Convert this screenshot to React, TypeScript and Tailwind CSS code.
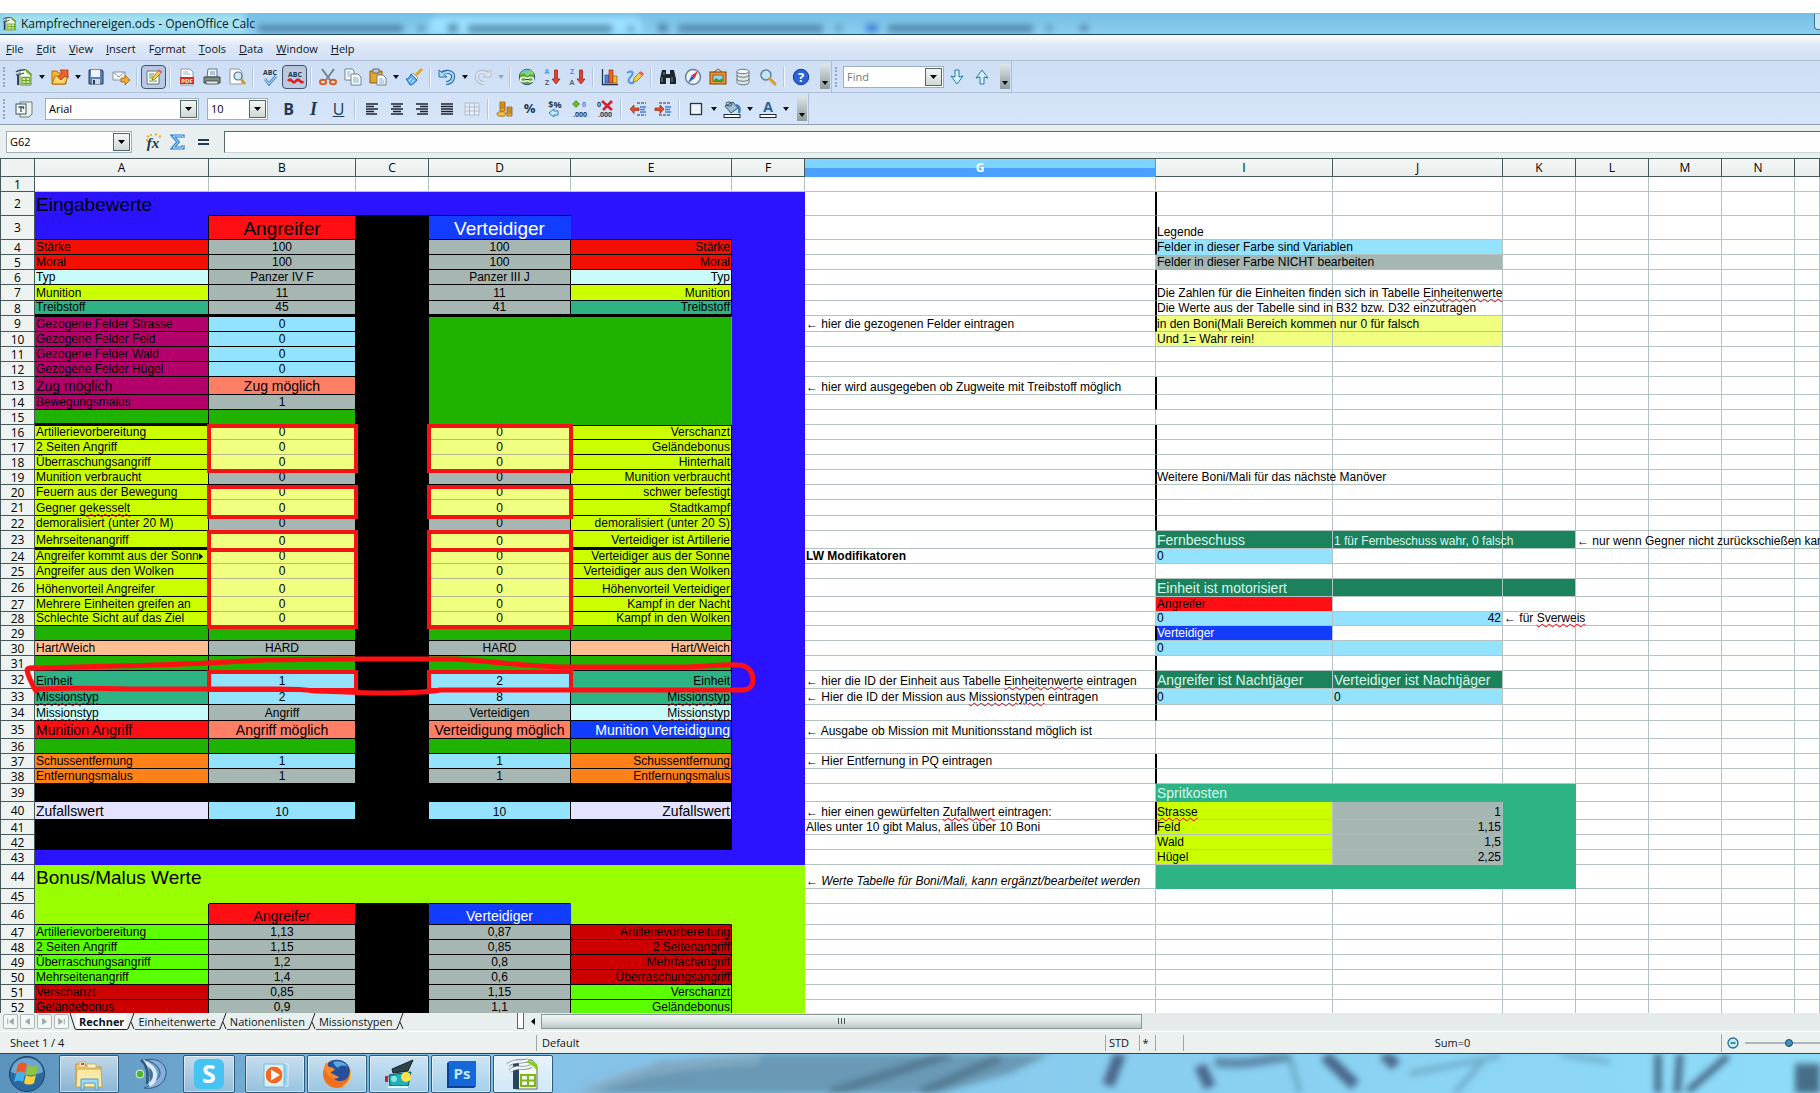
/**
 * App.tsx
 *
 * Spreadsheet window: title bar, menus, toolbars, the sheet itself,
 * sheet tabs, status bar and the desktop task bar.
 */

import React from 'react';
import clsx from 'clsx';

/* ---------- Sheet data ---------- */

interface CellData {
  text?: string;
  cls: string;
  colSpan?: number;
  rowSpan?: number;
}

interface RowData {
  n: number;
  h: string;
  cells: Record<string, CellData | null>;
}

const COLUMNS = ['A', 'B', 'C', 'D', 'E', 'F', 'G', 'I', 'J', 'K', 'L', 'M', 'N', 'O'];

const COLUMN_WIDTHS: Record<string, string> = {
  A: 'w-[174px]',
  B: 'w-[147px]',
  C: 'w-[73px]',
  D: 'w-[142px]',
  E: 'w-[161px]',
  F: 'w-[73px]',
  G: 'w-[351px]',
  I: 'w-[177px]',
  J: 'w-[170px]',
  K: 'w-[73px]',
  L: 'w-[73px]',
  M: 'w-[73px]',
  N: 'w-[73px]',
  O: 'w-auto',
};

const H14 = 'h-[14px]';
const H15 = 'h-[15px]';
const H16 = 'h-[16px]';
const H18 = 'h-[18px]';
const H21 = 'h-[21px]';
const H24 = 'h-[24px]';

const INK = 'border-black';
const GRID = 'border-[#b3c2c2]';

const GRAY = 'bg-[#a5b6b3]';
const SKY = 'bg-[#93e3ff]';
const YELLOW = 'bg-[#f1ff80]';
const LIME = 'bg-[#cbff00]';
const RED = 'bg-[#f20f00]';
const BRIGHT_RED = 'bg-[#ff0f14]';
const DARK_RED = 'bg-[#cc0000]';
const BLUE = 'bg-[#123dff]';
const ICE = 'bg-[#c9fbfb]';
const TEAL = 'bg-[#2eb385]';
const MAGENTA = 'bg-[#b4006b]';
const SALMON = 'bg-[#ff7f66]';
const GREEN = 'bg-[#1fb200]';
const NEON = 'bg-[#5aff00]';
const PEACH = 'bg-[#ffbe91]';
const ORANGE = 'bg-[#ff8117]';
const LAVENDER = 'bg-[#e3e3ff]';
const FOREST = 'bg-[#1c825c]';

const MEDIUM = 'text-sm/[16px]';
const LARGE = 'text-[19px]/[20px]';

const left = (text: string, ...cls: string[]): CellData => ({ text, cls: clsx(cls, INK) });
const mid = (text: string, ...cls: string[]): CellData => ({ text, cls: clsx('text-center', cls, INK) });
const right = (text: string, ...cls: string[]): CellData => ({ text, cls: clsx('text-right', cls, INK) });
const plain = (text: string, ...cls: string[]): CellData => ({ text, cls: clsx(cls, GRID) });
const soft = (text: string): CellData => ({ text, cls: `text-center ${YELLOW} border-b-[#b3b98c] border-r-black` });

// Attacker and defender columns mirror each other in most rows
const pair = (a: CellData, b: CellData, d: CellData, e: CellData) => ({ A: a, B: b, D: d, E: e });

const lime = (l: string, b: CellData, d: CellData, r: string, edge = '') =>
  pair(left(l, LIME, edge), b, d, right(r, LIME, edge));

const greenRow = () => pair(left('', GREEN), left('', GREEN), left('', GREEN), left('', GREEN));

const THICK = 'border-b-2';
const TOP = 'border-t';

const ROWS: RowData[] = [
  { n: 1, h: H15, cells: {} },
  { n: 2, h: H24, cells: {
    A: { text: 'Eingabewerte', cls: `${LARGE} bg-[#2c13ff] border-[#2c13ff]` },
    B: { cls: 'bg-[#2c13ff] border-[#2c13ff] border-b-black' },
    C: { cls: 'bg-[#2c13ff] border-[#2c13ff] border-b-black' },
    D: { cls: 'bg-[#2c13ff] border-[#2c13ff] border-b-black' },
  } },
  { n: 3, h: H24, cells: {
    A: { cls: 'bg-[#2c13ff] border-black' },
    B: mid('Angreifer', BRIGHT_RED, LARGE),
    D: { text: 'Verteidiger', cls: `text-center text-white ${BLUE} ${LARGE} border-r-[#123dff] border-b-black` },
    E: { cls: 'bg-[#2c13ff] border-[#2c13ff] border-b-black' },
    I: plain('Legende'),
  } },
  { n: 4, h: H15, cells: {
    ...pair(left('Stärke', RED), mid('100', GRAY), mid('100', GRAY), right('Stärke', RED)),
    I: { text: 'Felder in dieser Farbe sind Variablen', cls: `${SKY} border-[#93e3ff]` },
    J: plain('', SKY),
  } },
  { n: 5, h: H15, cells: {
    ...pair(left('Moral', RED), mid('100', GRAY), mid('100', GRAY), right('Moral', RED)),
    I: { text: 'Felder in dieser Farbe NICHT bearbeiten', cls: `${GRAY} border-[#a5b6b3]` },
    J: plain('', GRAY),
  } },
  { n: 6, h: H15, cells: pair(left('Typ', ICE), mid('Panzer IV F', GRAY), mid('Panzer III J', GRAY), right('Typ', ICE)) },
  { n: 7, h: H16, cells: {
    ...lime('Munition', mid('11', GRAY), mid('11', GRAY), 'Munition'),
    I: plain('Die Zahlen für die Einheiten finden sich in Tabelle ~Einheitenwerte~'),
  } },
  { n: 8, h: H15, cells: {
    ...pair(left('Treibstoff', TEAL, THICK), mid('45', GRAY, THICK), mid('41', GRAY, THICK), right('Treibstoff', TEAL, THICK)),
    I: plain('Die Werte aus der Tabelle sind in B32 bzw. D32 einzutragen'),
  } },
  { n: 9, h: H16, cells: {
    A: left('Gezogene Felder Strasse', MAGENTA, TOP),
    B: mid('0', SKY, TOP),
    D: { cls: `${GREEN} border-t border-t-black border-r-[#7d8f8c] border-b-[#1fb200]`, colSpan: 2, rowSpan: 7 },
    E: null,
    G: plain('← hier die gezogenen Felder eintragen'),
    I: plain('in den Boni(Mali Bereich kommen nur 0 für falsch', YELLOW),
    J: plain('', YELLOW),
  } },
  { n: 10, h: H15, cells: {
    A: left('Gezogene Felder Feld', MAGENTA), B: mid('0', SKY), D: null, E: null,
    I: plain('Und 1= Wahr rein!', YELLOW),
    J: plain('', YELLOW),
  } },
  { n: 11, h: H15, cells: { A: left('Gezogene Felder Wald', MAGENTA), B: mid('0', SKY), D: null, E: null } },
  { n: 12, h: H15, cells: { A: left('Gezogene Felder Hügel', MAGENTA), B: mid('0', SKY), D: null, E: null } },
  { n: 13, h: H18, cells: {
    A: left('Zug möglich', MAGENTA, MEDIUM), B: mid('Zug möglich', SALMON, MEDIUM), D: null, E: null,
    G: plain('← hier wird ausgegeben ob Zugweite mit Treibstoff möglich'),
  } },
  { n: 14, h: H15, cells: { A: left('Bewegungsmalus', MAGENTA), B: mid('1', GRAY), D: null, E: null } },
  { n: 15, h: H15, cells: { A: left('', GREEN, THICK), B: left('', GREEN), D: null, E: null } },
  { n: 16, h: H15, cells: lime('Artillerievorbereitung', soft('0'), soft('0'), 'Verschanzt', TOP) },
  { n: 17, h: H15, cells: lime('2 Seiten Angriff', soft('0'), soft('0'), 'Geländebonus') },
  { n: 18, h: H15, cells: lime('Überraschungsangriff', soft('0'), soft('0'), 'Hinterhalt') },
  { n: 19, h: H15, cells: {
    ...lime('Munition verbraucht', mid('0', GRAY), mid('0', GRAY), 'Munition verbraucht'),
    I: plain('Weitere Boni/Mali für das nächste Manöver'),
  } },
  { n: 20, h: H15, cells: lime('Feuern aus der Bewegung', soft('0'), soft('0'), 'schwer befestigt') },
  { n: 21, h: H16, cells: lime('Gegner ~gekesselt~', soft('0'), soft('0'), 'Stadtkampf') },
  { n: 22, h: H15, cells: lime('demoralisiert (unter 20 M)', mid('0', GRAY), mid('0', GRAY), 'demoralisiert (unter 20 S)') },
  { n: 23, h: H18, cells: {
    ...lime('Mehrseitenangriff', soft('0'), soft('0'), 'Verteidiger ist Artillerie', THICK),
    I: plain('Fernbeschuss', FOREST, MEDIUM, 'text-[#d9f7ec]'),
    J: plain('1 für Fernbeschuss wahr, 0 falsch', FOREST, 'text-[#d9f7ec]'),
    K: plain('', FOREST),
    L: plain('← nur wenn Gegner nicht zurückschießen kann'),
  } },
  { n: 24, h: H15, cells: {
    ...lime('Angreifer kommt aus der Sonn>', soft('0'), soft('0'), 'Verteidiger aus der Sonne', TOP),
    G: plain('LW Modifikatoren', 'font-bold'),
    I: plain('0', SKY),
  } },
  { n: 25, h: H15, cells: lime('Angreifer aus den Wolken', soft('0'), soft('0'), 'Verteidiger aus den Wolken') },
  { n: 26, h: H18, cells: {
    ...lime('Höhenvorteil Angreifer', soft('0'), soft('0'), 'Höhenvorteil Verteidiger'),
    I: plain('Einheit ist motorisiert', FOREST, MEDIUM, 'text-[#d9f7ec]'),
    J: plain('', FOREST),
    K: plain('', FOREST),
  } },
  { n: 27, h: H15, cells: {
    ...lime('Mehrere Einheiten greifen an', soft('0'), soft('0'), 'Kampf in der Nacht'),
    I: plain('Angreifer', BRIGHT_RED),
  } },
  { n: 28, h: H14, cells: {
    ...lime('Schlechte Sicht auf das Ziel', soft('0'), soft('0'), 'Kampf in den Wolken'),
    I: plain('0', SKY),
    J: plain('42', SKY, 'text-right'),
    K: plain('← für ~Sverweis~'),
  } },
  { n: 29, h: H15, cells: { ...greenRow(), I: plain('Verteidiger', BLUE, 'text-white') } },
  { n: 30, h: H15, cells: {
    ...pair(left('Hart/Weich', PEACH), mid('HARD', GRAY), mid('HARD', GRAY), right('Hart/Weich', PEACH)),
    I: plain('0', SKY),
    J: plain('', SKY),
  } },
  { n: 31, h: H15, cells: greenRow() },
  { n: 32, h: H18, cells: {
    ...pair(left('Einheit', TEAL), mid('1', SKY), mid('2', SKY), right('Einheit', TEAL)),
    G: plain('← hier die ID der Einheit aus Tabelle ~Einheitenwerte~ eintragen'),
    I: plain('Angreifer ist Nachtjäger', FOREST, MEDIUM, 'text-[#d9f7ec]'),
    J: plain('Verteidiger ist Nachtjäger', FOREST, MEDIUM, 'text-[#d9f7ec]'),
  } },
  { n: 33, h: H16, cells: {
    ...pair(left('~Missionstyp~', TEAL), mid('2', SKY), mid('8', SKY), right('~Missionstyp~', TEAL)),
    G: plain('← Hier die ID der Mission aus ~Missionstypen~ eintragen'),
    I: plain('0', SKY),
    J: plain('0', SKY),
  } },
  { n: 34, h: H16, cells: pair(left('~Missionstyp~', ICE), mid('Angriff', GRAY), mid('Verteidigen', GRAY), right('~Missionstyp~', ICE)) },
  { n: 35, h: H18, cells: {
    ...pair(
      left('Munition Angriff', BRIGHT_RED, MEDIUM),
      mid('Angriff möglich', SALMON, MEDIUM),
      mid('Verteidigung möglich', SALMON, MEDIUM),
      right('Munition Verteidigung', BLUE, MEDIUM, 'text-white'),
    ),
    G: plain('← Ausgabe ob Mission mit Munitionsstand möglich ist'),
  } },
  { n: 36, h: H15, cells: greenRow() },
  { n: 37, h: H15, cells: {
    ...pair(left('Schussentfernung', ORANGE), mid('1', SKY), mid('1', SKY), right('Schussentfernung', ORANGE)),
    G: plain('← Hier Entfernung in PQ eintragen'),
  } },
  { n: 38, h: H15, cells: pair(left('Entfernungsmalus', ORANGE), mid('1', GRAY), mid('1', GRAY), right('Entfernungsmalus', ORANGE)) },
  { n: 39, h: H18, cells: {
    I: { text: 'Spritkosten', cls: `${TEAL} ${MEDIUM} text-[#d9f7ec] border-[#2eb385]` },
    J: { cls: `${TEAL} border-[#2eb385]` },
    K: { cls: `${TEAL} border-[#2eb385]` },
  } },
  { n: 40, h: H18, cells: {
    ...pair(left('Zufallswert', LAVENDER, MEDIUM), mid('10', SKY), mid('10', SKY), right('Zufallswert', LAVENDER, MEDIUM)),
    G: plain('← hier einen gewürfelten ~Zufallwert~ eintragen:'),
    I: plain('~Strasse~', LIME),
    J: { text: '1', cls: `${GRAY} text-right border-[#adbbb8]` },
    K: { cls: `${TEAL} border-[#2eb385]` },
  } },
  { n: 41, h: H15, cells: {
    G: plain('Alles unter 10 gibt Malus, alles über 10 Boni'),
    I: plain('Feld', LIME),
    J: { text: '1,15', cls: `${GRAY} text-right border-[#adbbb8]` },
    K: { cls: `${TEAL} border-[#2eb385]` },
  } },
  { n: 42, h: H15, cells: {
    I: plain('Wald', LIME),
    J: { text: '1,5', cls: `${GRAY} text-right border-[#adbbb8]` },
    K: { cls: `${TEAL} border-[#2eb385]` },
  } },
  { n: 43, h: H15, cells: {
    I: plain('Hügel', LIME),
    J: { text: '2,25', cls: `${GRAY} text-right border-[#adbbb8]` },
    K: { cls: `${TEAL} border-[#2eb385]` },
  } },
  { n: 44, h: H24, cells: {
    A: { text: 'Bonus/Malus Werte', cls: `${LARGE} bg-[#99ff00] border-[#99ff00]` },
    G: plain('← Werte Tabelle für Boni/Mali, kann ergänzt/bearbeitet werden', 'italic'),
    I: { cls: `${TEAL} border-[#2eb385]` },
    J: { cls: `${TEAL} border-[#2eb385]` },
    K: { cls: `${TEAL} border-[#2eb385]` },
  } },
  { n: 45, h: H15, cells: {
    B: { cls: 'bg-[#99ff00] border-[#99ff00] border-b-black' },
    C: { cls: 'bg-[#99ff00] border-[#99ff00] border-b-black' },
    D: { cls: 'bg-[#99ff00] border-[#99ff00] border-b-black' },
  } },
  { n: 46, h: H21, cells: {
    A: { cls: 'bg-[#99ff00] border-black' },
    B: mid('Angreifer', BRIGHT_RED, MEDIUM),
    D: { text: 'Verteidiger', cls: `text-center text-white ${BLUE} ${MEDIUM} border-r-[#123dff] border-b-black` },
    E: { cls: 'bg-[#99ff00] border-[#99ff00] border-b-black' },
  } },
  { n: 47, h: H15, cells: pair(left('Artillerievorbereitung', NEON), mid('1,13', GRAY), mid('0,87', GRAY), right('Artillerievorbereitung', DARK_RED)) },
  { n: 48, h: H15, cells: pair(left('2 Seiten Angriff', NEON), mid('1,15', GRAY), mid('0,85', GRAY), right('2 Seitenangriff', DARK_RED)) },
  { n: 49, h: H15, cells: pair(left('Überraschungsangriff', NEON), mid('1,2', GRAY), mid('0,8', GRAY), right('Mehrfachangriff', DARK_RED)) },
  { n: 50, h: H15, cells: pair(left('Mehrseitenangriff', NEON), mid('1,4', GRAY), mid('0,6', GRAY), right('Überraschungsangriff', DARK_RED)) },
  { n: 51, h: H15, cells: pair(left('Verschanzt', DARK_RED), mid('0,85', GRAY), mid('1,15', GRAY), right('Verschanzt', NEON)) },
  { n: 52, h: H15, cells: pair(left('Geländebonus', DARK_RED), mid('0,9', GRAY), mid('1,1', GRAY), right('Geländebonus', NEON)) },
];

// Rows where a heavy black rule runs between G and I
const RULED = [2, 3, 4, 6, 7, 8, 9, 13, 14, 16, 17, 18, 19, 20, 21, 22, 29, 31, 32, 33, 34, 37, 38, 40, 41];

const fallbackCell = (col: string, n: number): CellData => {
  const inPanel = 'ABCDEF'.includes(col);
  if (!inPanel || n === 1) return { cls: GRID };
  if (col === 'C' && ((n >= 3 && n <= 42) || n >= 46)) return { cls: 'bg-black border-black' };
  if (col !== 'F' && (n === 39 || n === 41 || n === 42)) return { cls: 'bg-black border-black' };
  return { cls: n <= 43 ? 'bg-[#2c13ff] border-[#2c13ff]' : 'bg-[#99ff00] border-[#99ff00]' };
};

/* ---------- Sheet ---------- */

// ~word~ marks a misspelled word, a trailing > marks clipped text
const CellText = ({ text }: { text: string }) => {
  const clipped = text.endsWith('>');
  const parts = (clipped ? text.slice(0, -1) : text).split('~');
  return (
    <>
      {parts.map((part, i) =>
        i % 2 === 1 ? (
          <span key={i} className="underline decoration-red-600 decoration-wavy decoration-1 underline-offset-1">{part}</span>
        ) : (
          part
        ),
      )}
      {clipped && (
        <svg className="inline-block" width="4" height="7" viewBox="0 0 4 7" aria-hidden="true">
          <path d="M0 0l4 3.5L0 7z" />
        </svg>
      )}
    </>
  );
};

const Sheet = () => (
  <div className="relative min-h-0 flex-1 overflow-hidden border-t border-[#46585a] bg-white font-['Liberation_Sans',Arial,sans-serif] text-xs/[13px] text-black">
    <table className="w-full table-fixed border-separate border-spacing-0">
      <colgroup>
        <col className="w-[35px]" />
        {COLUMNS.map(c => (
          <col key={c} className={COLUMN_WIDTHS[c]} />
        ))}
      </colgroup>
      <thead>
        <tr className="h-[18px] font-['Open_Sans','Noto_Sans',sans-serif] text-xs/[16px]">
          <th className="border-r border-b border-l border-[#46585a] bg-[#eef2f1] p-0" aria-label="Select all" />
          {COLUMNS.map(c => (
            <th
              key={c}
              scope="col"
              className={clsx(
                'border-r border-b p-0',
                c === 'G'
                  ? 'border-[#4a9ff5] bg-linear-to-b from-[#7fd4ff] from-50% to-[#4aa0ff] to-50% font-bold text-white'
                  : 'border-[#46585a] bg-linear-to-b from-[#f4f7f7] to-[#e9eeed] font-normal',
              )}
            >
              {c === 'O' ? '' : c}
            </th>
          ))}
        </tr>
      </thead>
      <tbody>
        {ROWS.map(row => (
          <tr key={row.n} className={row.h}>
            <th
              scope="row"
              className="border-r border-b border-l border-[#46585a] bg-[#eef2f1] p-0 font-['Open_Sans','Noto_Sans',sans-serif] text-xs/[13px] font-normal"
            >
              {row.n}
            </th>
            {COLUMNS.map(col => {
              const cell = col in row.cells ? row.cells[col] : fallbackCell(col, row.n);
              if (!cell) return null;
              return (
                <td
                  key={col}
                  colSpan={cell.colSpan}
                  rowSpan={cell.rowSpan}
                  className={clsx(
                    'border-r border-b px-px py-0 align-bottom whitespace-nowrap',
                    cell.cls,
                    col === 'G' && RULED.includes(row.n) && 'border-r-black',
                    col === 'I' && RULED.includes(row.n) && 'border-l border-l-black pl-0',
                  )}
                >
                  {cell.text && <CellText text={cell.text} />}
                </td>
              );
            })}
          </tr>
        ))}
      </tbody>
    </table>

    {/* Red pen marks over the input cells */}
    <svg className="pointer-events-none absolute top-0 left-0" width="820" height="560" viewBox="0 158 820 560" fill="none" stroke="#f01414" aria-hidden="true">
      <g strokeWidth="4">
        <rect x="209" y="425" width="147" height="45" />
        <rect x="429" y="425" width="142" height="45" />
        <rect x="209" y="486" width="147" height="30" />
        <rect x="429" y="486" width="142" height="30" />
        <rect x="209" y="531" width="147" height="18" />
        <rect x="429" y="531" width="142" height="18" />
        <rect x="209" y="549" width="147" height="77" />
        <rect x="429" y="549" width="142" height="77" />
        <rect x="209" y="671" width="147" height="18" />
        <rect x="429" y="671" width="142" height="18" />
      </g>
      <path
        strokeWidth="5"
        stroke="#ff1014"
        strokeLinecap="round"
        strokeLinejoin="round"
        d="M36 690C32 683 28 675 27 669C28 666 33 667 40 667C90 665 150 665 207 662L265 659L340 658H455C490 660 510 664 560 666H680C705 666 720 663 738 664C748 664 753 671 753 679C753 686 748 689 742 689H560L440 689C425 692 400 692 385 692C350 692 335 690 315 690C300 688 290 688 280 688H130C100 687 60 687 36 688"
      />
    </svg>
  </div>
);

/* ---------- Toolbar pieces ---------- */

const Icon = ({ children }: { children: React.ReactNode }) => (
  <svg className="overflow-visible" width="18" height="18" viewBox="0 0 18 18" fill="none" aria-hidden="true">
    {children}
  </svg>
);

const Tool = ({ label, pressed, children }: { label: string; pressed?: boolean; children: React.ReactNode }) => (
  <button
    type="button"
    aria-label={label}
    className={clsx(
      'flex h-6 w-[25px] shrink-0 items-center justify-center',
      pressed && 'rounded-sm border border-[#44546b] bg-[#bccbe4] shadow-inner',
    )}
  >
    {children}
  </button>
);

const Drop = ({ label, faded }: { label: string; faded?: boolean }) => (
  <button type="button" aria-label={label} className="flex h-6 w-[11px] shrink-0 items-center justify-center">
    <svg width="6" height="4" viewBox="0 0 6 4" fill={faded ? '#9aa6b8' : '#111'} aria-hidden="true">
      <path d="M0 0h6L3 4z" />
    </svg>
  </button>
);

const Sep = () => <div className="mx-[3px] h-5 w-0.5 shrink-0 border-r border-l border-r-white/70 border-l-[#b4c5df]" />;

const Grip = () => <div className="mr-1 ml-[3px] h-5 w-1 shrink-0 border-l-2 border-dotted border-[#93a5bf]" />;

const Overflow = () => (
  <button type="button" aria-label="More commands" className="flex h-[25px] w-2.5 shrink-0 items-end justify-center bg-linear-to-b from-[#dfe6e8] to-[#8e9a9f] pb-1">
    <svg width="6" height="4" viewBox="0 0 6 4" aria-hidden="true">
      <path d="M0 0h6L3 4z" />
    </svg>
  </button>
);

const Combo = ({ label, value, placeholder, width }: { label: string; value?: string; placeholder?: string; width: string }) => (
  <div className={clsx('flex h-[22px] shrink-0 items-center border border-[#9fb0bd] bg-white p-px', width)}>
    <input
      aria-label={label}
      defaultValue={value}
      placeholder={placeholder}
      className="h-full min-w-0 flex-1 bg-transparent px-0.5 text-[11px] text-black outline-none placeholder:text-[#6f7a80]"
    />
    <button type="button" aria-label={`${label} list`} className="flex h-[18px] w-[17px] items-center justify-center border border-[#56676b] bg-linear-to-b from-[#f3f7f6] to-[#cfd9d8]">
      <svg width="7" height="4" viewBox="0 0 7 4" aria-hidden="true">
        <path d="M0 0h7L3.500 4z" />
      </svg>
    </button>
  </div>
);

const SheetDoc = () => (
  <>
    <path d="M5 2h7l4 4v11H5z" fill="#f7fbf4" stroke="#6d8f43" />
    <path d="M11 1l6 5-1 2-5-4z" fill="#6fae1f" />
    <path d="M1 4c3-3 6-1 9-2.500M1 7c3-2 5 0 8-2" stroke="#31465c" strokeWidth="1.200" />
    <path d="M3 7v10" stroke="#31465c" strokeWidth="2" />
    <path d="M7 9.500h8v6H7zM7 12.500h8M11 9.500v6" stroke="#69a81c" strokeWidth="1.300" />
  </>
);

const Lines = ({ d }: { d: string }) => (
  <Icon>
    <path d={d} stroke="#1d2733" strokeWidth="1.300" />
  </Icon>
);

const StandardBar = () => (
  <div className="flex h-8 items-center border-b border-[#aebfd3]">
    <Grip />
    <Tool label="New"><Icon><SheetDoc /></Icon></Tool>
    <Drop label="New list" />
    <Tool label="Open">
      <Icon>
        <path d="M1 3h5l1 2h8v11H1z" fill="#f7b733" stroke="#b56b0a" />
        <path d="M4 8h13l-3 8H1z" fill="#ffd467" stroke="#b56b0a" />
        <path d="M7 9l4-4-2-3h8v8l-3-2-4 4z" fill="#f0642c" stroke="#9c2a0c" strokeWidth=".7" />
      </Icon>
    </Tool>
    <Drop label="Open list" />
    <Tool label="Save">
      <Icon>
        <path d="M2 2h13l1 1v13H2z" fill="#5a83b4" stroke="#223b5e" />
        <path d="M4 2h9v7H4z" fill="#eef4fa" />
        <path d="M5 11h8v5H5z" fill="#cdd8e4" />
        <path d="M6 12h2v4H6z" fill="#223b5e" />
      </Icon>
    </Tool>
    <Tool label="Send as e-mail">
      <Icon>
        <path d="M1 4h12v8H1z" fill="#fafafa" stroke="#8794a0" />
        <path d="M1 4l6 5 6-5" stroke="#8794a0" />
        <path d="M9 10h4V7l5 5-5 5v-3H9z" fill="#f7a928" stroke="#a8620b" strokeWidth=".8" />
      </Icon>
    </Tool>
    <Sep />
    <Tool label="Edit file" pressed>
      <Icon>
        <path d="M2 3h12v13H2z" fill="#fdfdfd" stroke="#62727f" />
        <path d="M4 6h5M4 8h4M4 10h3M4 13h8" stroke="#5fa02b" />
        <path d="M7 12l1-3 6-7 3 2-7 7z" fill="#f5cf3e" stroke="#96691b" strokeWidth=".8" />
        <path d="M13 3l1-1.500 3 2L16 5z" fill="#e0559a" />
      </Icon>
    </Tool>
    <Sep />
    <Tool label="Export as PDF">
      <Icon>
        <path d="M3 1h9l3 3v13H3z" fill="#fff" stroke="#8b97a1" />
        <path d="M5 4h5M5 6h7" stroke="#a7b1ba" />
        <rect x="2" y="9" width="14" height="7" fill="#dd2a1e" />
        <text x="9" y="15" fontSize="6" fontWeight="700" textAnchor="middle" fill="#fff">PDF</text>
      </Icon>
    </Tool>
    <Tool label="Print">
      <Icon>
        <path d="M5 1h9v8H4z" fill="#f4f8fb" stroke="#62727f" />
        <path d="M7 4h5M7 6h5" stroke="#5b94cf" />
        <path d="M1 9h16v6H1z" fill="#7f8c88" stroke="#37433f" />
        <path d="M3 13h12v3H3z" fill="#e6ebe4" stroke="#37433f" strokeWidth=".8" />
      </Icon>
    </Tool>
    <Tool label="Page preview">
      <Icon>
        <path d="M2 1h9l3 3v12H2z" fill="#fff" stroke="#8b97a1" />
        <circle cx="10" cy="8" r="4" fill="#cdeaf7" stroke="#5e7485" strokeWidth="1.200" />
        <path d="M13 11l4 5" stroke="#cf9524" strokeWidth="2.500" />
      </Icon>
    </Tool>
    <Sep />
    <Tool label="Spelling">
      <Icon>
        <text x="9" y="7" fontSize="7" fontWeight="700" textAnchor="middle" fill="#26364a">ABC</text>
        <path d="M4 11l4 5 7-8" stroke="#3d85cd" strokeWidth="2.800" />
        <path d="M4 11l4 5 7-8" stroke="#dff0ff" strokeWidth="1" />
      </Icon>
    </Tool>
    <Tool label="AutoSpellcheck" pressed>
      <Icon>
        <text x="9" y="9" fontSize="7" fontWeight="700" textAnchor="middle" fill="#26364a">ABC</text>
        <path d="M2 13q2-2.500 4 0t4 0 4 0 3 0" stroke="#df1f1f" strokeWidth="2.800" />
      </Icon>
    </Tool>
    <Sep />
    <Tool label="Cut">
      <Icon>
        <path d="M3 1l8 11M15 1L7 12" stroke="#718292" strokeWidth="2" />
        <ellipse cx="4" cy="14" rx="3" ry="2.300" stroke="#dd5b1c" strokeWidth="2" />
        <ellipse cx="14" cy="14" rx="3" ry="2.300" stroke="#dd5b1c" strokeWidth="2" />
      </Icon>
    </Tool>
    <Tool label="Copy">
      <Icon>
        <path d="M1 1h7l2 2v9H1z" fill="#fff" stroke="#6c8092" />
        <path d="M7 6h7l3 3v8H7z" fill="#fff" stroke="#6c8092" />
        <path d="M3 4h4M3 6h3M3 8h3M9 10h5M9 12h6M9 14h6" stroke="#7fa9d3" />
      </Icon>
    </Tool>
    <Tool label="Paste">
      <Icon>
        <path d="M1 3h12v12H1z" fill="#e7a52b" stroke="#8f5d0d" />
        <path d="M4 1h6v4H4z" fill="#c4ccd1" stroke="#5f6d76" />
        <path d="M8 7h6l3 3v7H8z" fill="#fff" stroke="#6c8092" />
        <path d="M10 11h4M10 13h5M10 15h5" stroke="#7fa9d3" />
      </Icon>
    </Tool>
    <Drop label="Paste list" />
    <Tool label="Format paintbrush">
      <Icon>
        <path d="M17 1l-6 6" stroke="#e2a52f" strokeWidth="3" />
        <path d="M8 5l5 5-2 2-5-5z" fill="#e8edf2" stroke="#6a7a89" strokeWidth=".7" />
        <path d="M6 6l6 6c-2 3-5 5-7 5-1-2-2-3-4-6 2 0 4-2 5-5z" fill="#67b0f2" stroke="#2362b4" />
        <path d="M4 13l3-3M6 15l3-3" stroke="#fff" />
      </Icon>
    </Tool>
    <Sep />
    <Tool label="Undo">
      <Icon>
        <path d="M4 5c7-3 12 0 11 5-1 3-3 5-7 5" stroke="#2d6aa5" strokeWidth="4" />
        <path d="M1 2v7h8z" fill="#a8dcf6" stroke="#2d6aa5" />
        <path d="M4 6c7-4 12-1 11 4-1 3-3 5-7 5" stroke="#a8dcf6" strokeWidth="2" />
      </Icon>
    </Tool>
    <Drop label="Undo list" />
    <Tool label="Redo">
      <Icon>
        <path d="M14 5C7 2 2 5 3 10c1 3 3 5 7 5" stroke="#b3bfcc" strokeWidth="4" />
        <path d="M17 2v7H9z" fill="#dde6f1" stroke="#b3bfcc" />
        <path d="M14 6C7 2 2 5 3 10c1 3 3 5 7 5" stroke="#dde6f1" strokeWidth="2" />
      </Icon>
    </Tool>
    <Drop label="Redo list" faded />
    <Sep />
    <Tool label="Hyperlink">
      <Icon>
        <circle cx="9" cy="9" r="7.700" fill="#5fa83a" stroke="#28557e" />
        <path d="M2 7c1-4 5-6 8-5 4 0 5 2 6 5l-4-1-3 2-3-3z" fill="#8fdc4f" />
        <path d="M4 4c3-3 7-3 9 0l-4 1z" fill="#6dc0ee" />
        <rect x="2.500" y="9.500" width="6" height="4" rx="2" stroke="#fff" strokeWidth="1.500" />
        <rect x="9.500" y="9.500" width="6" height="4" rx="2" stroke="#fff" strokeWidth="1.500" />
        <path d="M7 11.500h4" stroke="#31465c" />
      </Icon>
    </Tool>
    <Tool label="Sort ascending">
      <Icon>
        <text x="4" y="6" fontSize="7" fontWeight="700" textAnchor="middle" fill="#4599e8">A</text>
        <text x="4" y="17" fontSize="7" fontWeight="700" textAnchor="middle" fill="#536577">Z</text>
        <path d="M11.500 2h3v9H17l-4 5-4-5h2.500z" fill="#e8402b" stroke="#8c1d10" strokeWidth=".7" />
      </Icon>
    </Tool>
    <Tool label="Sort descending">
      <Icon>
        <text x="4" y="6" fontSize="7" fontWeight="700" textAnchor="middle" fill="#4599e8">Z</text>
        <text x="4" y="17" fontSize="7" fontWeight="700" textAnchor="middle" fill="#536577">A</text>
        <path d="M11.500 2h3v9H17l-4 5-4-5h2.500z" fill="#e8402b" stroke="#8c1d10" strokeWidth=".7" />
      </Icon>
    </Tool>
    <Sep />
    <Tool label="Chart">
      <Icon>
        <path d="M1.500 1v15.500H17" stroke="#25344a" strokeWidth="1.300" />
        <path d="M4 7h4v8H4z" fill="#3f86e4" stroke="#1c4784" strokeWidth=".7" />
        <path d="M8 2h4v13H8z" fill="#f1622c" stroke="#8e2b0d" strokeWidth=".7" />
        <path d="M12 8h4v7h-4z" fill="#f4b82d" stroke="#8a5c0c" strokeWidth=".7" />
      </Icon>
    </Tool>
    <Tool label="Show draw functions">
      <Icon>
        <path d="M1 5c4-3 7-1 5 2s-5 5-3 7 4 1 5 0" stroke="#4f94e2" strokeWidth="2" />
        <path d="M7 14l1-4 6-6 3 3-6 6z" fill="#f5cf3e" stroke="#96691b" strokeWidth=".8" />
        <path d="M13 5l2-2 3 3-2 2z" fill="#e2645c" />
      </Icon>
    </Tool>
    <Sep />
    <Tool label="Find and replace">
      <Icon>
        <path d="M3 2h4v4h4V2h4l2 9v5h-6v-6H7v6H1v-5z" fill="#1c242c" />
        <path d="M3 9v5M13 9v5M5 4v3" stroke="#79889a" />
      </Icon>
    </Tool>
    <Tool label="Navigator">
      <Icon>
        <circle cx="9" cy="9" r="7.500" fill="#eef5fb" stroke="#6d8294" strokeWidth="1.500" />
        <path d="M14 3l-3.500 7.500-3-3z" fill="#dd2a2a" />
        <path d="M4 15l3.500-7.500 3 3z" fill="#2a62c5" />
      </Icon>
    </Tool>
    <Tool label="Gallery">
      <Icon>
        <path d="M5 4l4-3 4 3" stroke="#7b5313" />
        <rect x="1" y="4" width="16" height="12" fill="#f0952f" stroke="#7b3f08" />
        <rect x="4" y="7" width="10" height="6.500" fill="#8fd3f5" stroke="#7b3f08" strokeWidth=".7" />
        <path d="M4 13l3-3 3 2 4-2v3.500H4z" fill="#439d2c" />
      </Icon>
    </Tool>
    <Tool label="Data sources">
      <Icon>
        <path d="M3 3.500v11c0 3 12 3 12 0v-11" fill="#dfe6e8" stroke="#697a80" />
        <ellipse cx="9" cy="3.500" rx="6" ry="2.200" fill="#f7fafa" stroke="#697a80" />
        <path d="M3 7c0 3 12 3 12 0M3 11c0 3 12 3 12 0" stroke="#697a80" />
      </Icon>
    </Tool>
    <Tool label="Zoom">
      <Icon>
        <circle cx="7" cy="7" r="5" fill="#bfe6f8" stroke="#687f90" strokeWidth="1.500" />
        <path d="M11 11l5 5" stroke="#dd9c27" strokeWidth="3" strokeLinecap="round" />
      </Icon>
    </Tool>
    <Sep />
    <Tool label="Help">
      <Icon>
        <circle cx="9" cy="9" r="7.700" fill="#2a62dc" stroke="#153a94" />
        <text x="9" y="14" fontSize="13" fontWeight="700" textAnchor="middle" fill="#fff">?</text>
      </Icon>
    </Tool>
    <div className="ml-[7px] flex h-full items-center border-r border-[#aebfd3] pr-px"><Overflow /></div>
    <div className="flex h-full items-center border-r border-[#aebfd3] pr-px">
      <Grip />
      <Combo label="Find" placeholder="Find" width="w-[101px]" />
      <Tool label="Find next">
        <Icon>
          <path d="M7 2h4v7l4-1-6 8-6-8 4 1z" fill="#d8f3fb" stroke="#247aa3" />
        </Icon>
      </Tool>
      <Tool label="Find previous">
        <Icon>
          <path d="M7 16h4V9l4 1-6-8-6 8 4-1z" fill="#d8f3fb" stroke="#247aa3" />
        </Icon>
      </Tool>
      <div className="ml-1.5 flex"><Overflow /></div>
    </div>
  </div>
);

const FormattingBar = () => (
  <div className="flex h-[31px] items-center">
    <Grip />
    <Tool label="Styles and formatting">
      <Icon>
        <path d="M5 2h12v12l-3 3H5z" fill="#eaf1ee" stroke="#6d8080" />
        <rect x="1" y="4" width="10" height="10" fill="#f6faf9" stroke="#41535a" />
        <path d="M3.500 7h5v2M6 7v5" stroke="#41535a" strokeWidth="1.300" />
      </Icon>
    </Tool>
    <div className="ml-[9px] flex shrink-0 gap-2">
      <Combo label="Font name" value="Arial" width="w-[154px]" />
      <Combo label="Font size" value="10" width="w-[61px]" />
    </div>
    <div className="ml-2 flex text-base/6 text-[#1f3a57]">
      <Tool label="Bold"><span className="font-bold">B</span></Tool>
      <Tool label="Italic"><span className="font-['Liberation_Serif',serif] text-lg font-bold italic">I</span></Tool>
      <Tool label="Underline"><span className="underline">U</span></Tool>
    </div>
    <Sep />
    <Tool label="Align left"><Lines d="M3 4h12M3 6.500h8M3 9h12M3 11.500h8M3 14h11" /></Tool>
    <Tool label="Centre"><Lines d="M3 4h12M5 6.500h8M3 9h12M5 11.500h8M3 14h12" /></Tool>
    <Tool label="Align right"><Lines d="M3 4h12M7 6.500h8M3 9h12M7 11.500h8M4 14h11" /></Tool>
    <Tool label="Justified"><Lines d="M3 4h12M3 6.500h12M3 9h12M3 11.500h12M3 14h12" /></Tool>
    <Tool label="Merge cells">
      <Icon>
        <path d="M2 3h14v12H2zM2 7h14M2 11h14M6.500 3v12M11.500 3v12" fill="#e6edf7" stroke="#b0bccb" />
      </Icon>
    </Tool>
    <Sep />
    <Tool label="Currency">
      <Icon>
        <path d="M4 2h5v9H4z" fill="#f2ae2c" stroke="#955b0c" strokeWidth=".8" />
        <path d="M4 4h5M4 6h5M4 8h5" stroke="#955b0c" strokeWidth=".8" />
        <path d="M11 7h5v9h-5z" fill="#f2ae2c" stroke="#955b0c" strokeWidth=".8" />
        <path d="M11 9h5M11 11h5M11 13h5" stroke="#955b0c" strokeWidth=".8" />
        <ellipse cx="5.500" cy="14" rx="4.500" ry="2.300" fill="#f7bd48" stroke="#955b0c" strokeWidth=".8" />
      </Icon>
    </Tool>
    <Tool label="Percent"><span className="text-[13px] font-bold text-[#1f3a57]">%</span></Tool>
    <Tool label="Standard format">
      <Icon>
        <text x="9" y="8" fontSize="9" fontWeight="700" textAnchor="middle" fill="#1f3a57">$%</text>
        <path d="M3 13l5-4v2h4v4H8v2z" fill="#c9ecfb" stroke="#2d7fbd" />
      </Icon>
    </Tool>
    <Tool label="Add decimal place">
      <Icon>
        <path d="M4 1h2v2h2v2H6v2H4V5H2V3h2z" fill="#6fc42f" stroke="#3d8410" strokeWidth=".7" />
        <text x="13" y="7" fontSize="7" fontWeight="700" textAnchor="middle" fill="#3d7fdd">0</text>
        <text x="9" y="17" fontSize="7" fontWeight="700" textAnchor="middle" fill="#1f3a57">.000</text>
      </Icon>
    </Tool>
    <Tool label="Delete decimal place">
      <Icon>
        <text x="3" y="7" fontSize="7" fontWeight="700" textAnchor="middle" fill="#1f3a57">0</text>
        <text x="9" y="17" fontSize="7" fontWeight="700" textAnchor="middle" fill="#1f3a57">.000</text>
        <path d="M6 1l10 9M16 1L7 10" stroke="#d61f2c" strokeWidth="2.600" />
      </Icon>
    </Tool>
    <Sep />
    <Tool label="Decrease indent">
      <Icon>
        <path d="M8 3h9M8 15h9" stroke="#27364a" strokeDasharray="3 1" />
        <path d="M11 7h6M11 9.500h5M11 12h6" stroke="#3d7fdd" strokeWidth="1.500" />
        <path d="M1 9l4-4v3h5v2.500H5v3z" fill="#e8502b" stroke="#8c260f" strokeWidth=".7" />
      </Icon>
    </Tool>
    <Tool label="Increase indent">
      <Icon>
        <path d="M5 3h12M5 15h12" stroke="#27364a" strokeDasharray="3 1" />
        <path d="M11 7h6M11 9.500h5M11 12h6" stroke="#3d7fdd" strokeWidth="1.500" />
        <path d="M10 9L6 5v3H1v2.500h5v3z" fill="#e8502b" stroke="#8c260f" strokeWidth=".7" />
      </Icon>
    </Tool>
    <Sep />
    <Tool label="Borders">
      <Icon>
        <rect x="3.500" y="3.500" width="11" height="11" fill="#eef5f6" stroke="#26343d" strokeWidth="1.300" />
      </Icon>
    </Tool>
    <Drop label="Borders list" />
    <Tool label="Background colour">
      <Icon>
        <path d="M2 6l8-4 5 6-7 5z" fill="#9fbfd6" stroke="#36506a" />
        <path d="M13 5c4 1 4 4 3 8" stroke="#3d7fbd" strokeWidth="2.500" />
        <ellipse cx="6" cy="4" rx="3" ry="2" stroke="#36506a" />
        <rect x="1" y="14.500" width="16" height="3" fill="#fff" stroke="#1d2733" />
      </Icon>
    </Tool>
    <Drop label="Background colour list" />
    <Tool label="Font colour">
      <Icon>
        <text x="9" y="12" fontSize="14" fontWeight="700" textAnchor="middle" fill="#2f5f92">A</text>
        <rect x="1" y="14.500" width="16" height="3" fill="#fff" stroke="#1d2733" />
      </Icon>
    </Tool>
    <Drop label="Font colour list" />
    <div className="ml-1.5 flex h-full items-center border-r border-[#aebfd3] pr-px"><Overflow /></div>
  </div>
);

/* ---------- Window chrome ---------- */

const MENUS: [string, string, string][] = [
  ['', 'F', 'ile'],
  ['', 'E', 'dit'],
  ['', 'V', 'iew'],
  ['', 'I', 'nsert'],
  ['F', 'o', 'rmat'],
  ['', 'T', 'ools'],
  ['', 'D', 'ata'],
  ['', 'W', 'indow'],
  ['', 'H', 'elp'],
];

const TitleBar = () => (
  <header className="relative flex h-[22px] shrink-0 items-center overflow-hidden border-b border-[#1f4a63] bg-linear-to-b from-[#74bfe6] to-[#8ccdf0] pl-[2px]">
    {/* Window behind shows through the glass */}
    <svg className="absolute inset-0 h-full w-full blur-[3px]" aria-hidden="true">
      <rect x="0" y="0" width="245" height="22" fill="#a4e0f0" />
      <rect x="430" y="4" width="212" height="24" rx="8" fill="#9be0ff" />
      <g fill="#2f6283" opacity=".65">
        <rect x="258" y="12" width="145" height="7" />
        <rect x="418" y="13" width="6" height="5" />
        <rect x="448" y="11" width="10" height="8" />
        <rect x="468" y="12" width="144" height="7" />
        <rect x="628" y="13" width="6" height="5" />
        <rect x="658" y="11" width="10" height="8" />
        <rect x="678" y="12" width="145" height="7" />
        <rect x="836" y="13" width="6" height="5" />
        <rect x="866" y="11" width="12" height="8" fill="#1c5fc9" />
        <rect x="888" y="12" width="145" height="7" />
        <rect x="1046" y="13" width="6" height="5" />
        <rect x="1080" y="12" width="8" height="6" />
      </g>
    </svg>
    <div className="relative flex flex-1 items-center gap-1">
      <svg width="15" height="17" viewBox="0 0 18 18" fill="none" aria-hidden="true"><SheetDoc /></svg>
      <h1 className="flex-1 text-xs/5 text-[#0c1c28]">Kampfrechnereigen.ods - OpenOffice Calc</h1>
      <button type="button" aria-label="Minimize" className="-mr-1 h-4 w-2.5 self-start rounded-bl-sm border border-t-0 border-[#3f7593] bg-white/60" />
    </div>
  </header>
);

const MenuBar = () => (
  <nav className="flex h-[26px] shrink-0 items-center gap-[13px] border-b border-[#aebfd3] bg-linear-to-b from-white via-[#dfe8f8] via-40% to-[#d3e0f5] px-1.5 pt-0.5 text-[11px]">
    {MENUS.map(([before, key, after]) => (
      <button key={key + after} type="button" className="leading-4">
        {before}
        <span className="underline">{key}</span>
        {after}
      </button>
    ))}
  </nav>
);

const FormulaBar = () => (
  <div className="flex h-[34px] shrink-0 items-center border-t border-[#8f9fae] bg-[#e9efee] pl-1.5">
    <Combo label="Name box" value="G62" width="w-[126px]" />
    <div className="ml-2 flex text-[#1f3a57]">
      <Tool label="Function wizard">
        <Icon>
          <path d="M3 3l2 1M7 1l0 2M11 2l2-1M15 4l2-1M2 7l2 0" stroke="#f0b323" strokeWidth="2" />
          <text x="9" y="15" fontSize="15" fontWeight="700" fontStyle="italic" textAnchor="middle" fill="#1f3a57" fontFamily="Liberation Serif">fx</text>
        </Icon>
      </Tool>
      <Tool label="Sum">
        <Icon>
          <path d="M14 5V3H4l5 6-5 6h10v-3" stroke="#2b7fd0" strokeWidth="3.200" />
          <path d="M14 5V3H4l5 6-5 6h10v-3" stroke="#cdeeff" strokeWidth="1" />
        </Icon>
      </Tool>
      <Tool label="Function">
        <Icon>
          <path d="M4 7h11M4 11h11" stroke="#1f3a57" strokeWidth="1.800" />
        </Icon>
      </Tool>
    </div>
    <input aria-label="Input line" className="ml-[9px] h-[22px] min-w-0 flex-1 border border-r-0 border-[#56676b] border-b-[#c9d4d4] bg-white px-1 text-[11px] outline-none" />
  </div>
);

const TABS = ['Rechner', 'Einheitenwerte', 'Nationenlisten', 'Missionstypen'];
const NAV = [
  ['First sheet', 'M4 4v6M10 4L6 7l4 3z'],
  ['Previous sheet', 'M9 4L5 7l4 3z'],
  ['Next sheet', 'M5 4l4 3-4 3z'],
  ['Last sheet', 'M10 4v6M4 4l4 3-4 3z'],
];

const SheetTabs = () => (
  <div className="flex h-[18px] shrink-0 items-start bg-[#e9efee]">
    <div className="flex w-[517px] shrink-0 items-start">
      <div className="flex gap-0.5 pt-px pl-[3px]">
        {NAV.map(([label, d]) => (
          <button key={label} type="button" aria-label={label} className="rounded-xs border border-[#a9b8b6] bg-[#f3f6f5]">
            <svg width="13" height="13" viewBox="0 0 14 14" fill="#9aa8a7" stroke="#9aa8a7" aria-hidden="true"><path d={d} /></svg>
          </button>
        ))}
      </div>
      <svg width="7" height="17" viewBox="0 0 7 17" stroke="#222" aria-hidden="true"><path d="M1 0l5 16h1" fill="none" /></svg>
      {TABS.map((tab, i) => (
        <React.Fragment key={tab}>
          <button
            type="button"
            className={clsx('h-[17px] border-b px-[3px] text-[11px]/[17px]', i === 0 ? 'border-[#222] bg-white font-bold' : 'border-[#56676b]')}
          >
            {tab}
          </button>
          <svg width="8" height="17" viewBox="0 0 8 17" stroke="#222" aria-hidden="true"><path d="M0 16h1L7 0M4 9l3 7" fill="none" /></svg>
        </React.Fragment>
      ))}
    </div>
    <div className="h-4 w-[7px] shrink-0 border border-t-0 border-[#56676b] bg-white" />
    <button type="button" aria-label="Scroll left" className="flex h-4 w-[17px] shrink-0 items-center justify-center">
      <svg width="4" height="7" viewBox="0 0 4 7" aria-hidden="true"><path d="M4 0v7L0 3.500z" /></svg>
    </button>
    <div className="flex h-4 flex-1 items-center bg-[#e4ebea]">
      <div className="flex h-[15px] w-[47%] items-center justify-center gap-0.5 border border-[#8a9a98] bg-linear-to-b from-[#f1f5f5] via-[#dde5e5] via-50% to-[#b9c6c6]">
        <span className="h-1.5 w-px bg-[#46585a]" />
        <span className="h-1.5 w-px bg-[#46585a]" />
        <span className="h-1.5 w-px bg-[#46585a]" />
      </div>
    </div>
  </div>
);

const StatusBar = () => (
  <div className="flex h-[22px] shrink-0 items-center border-t border-white bg-[#ecf1f0] text-[11px]/4">
    <span className="w-[536px] shrink-0 pl-2.5">Sheet 1 / 4</span>
    <span className="flex-1 border-l border-[#9aa8a7] pl-[5px]">Default</span>
    <span className="w-[34px] shrink-0 border-l border-[#9aa8a7] pl-[3px]">STD</span>
    <span className="w-4 shrink-0 border-l border-[#9aa8a7] pr-1 text-center">*</span>
    <span className="h-4 w-[29px] shrink-0 border-x border-[#9aa8a7]" />
    <span className="w-[537px] shrink-0 text-center">Sum=0</span>
    <div className="flex h-[18px] w-[99px] shrink-0 items-center overflow-hidden border-l border-[#9aa8a7] pl-[5px]">
      <button type="button" aria-label="Zoom out" className="mr-1.5 shrink-0">
        <svg width="12" height="12" viewBox="0 0 12 12" aria-hidden="true">
          <circle cx="6" cy="6" r="5" fill="#c5ecf9" stroke="#256e95" strokeWidth="1.300" />
          <path d="M3.500 6h5" stroke="#1b4a66" strokeWidth="1.300" />
        </svg>
      </button>
      <input
        type="range"
        aria-label="Zoom"
        defaultValue={41}
        className="h-4 w-[106px] shrink-0 appearance-none bg-linear-to-b from-transparent from-45% via-[#46585a] via-50% to-transparent to-55% [&::-webkit-slider-thumb]:size-2 [&::-webkit-slider-thumb]:appearance-none [&::-webkit-slider-thumb]:rounded-full [&::-webkit-slider-thumb]:border [&::-webkit-slider-thumb]:border-[#174a68] [&::-webkit-slider-thumb]:bg-[#3c93bd]"
      />
    </div>
  </div>
);

/* ---------- Task bar ---------- */

const TASKS: { name: string; framed: string; art: React.ReactNode }[] = [
  {
    name: 'Explorer',
    framed: 'w-[60px]',
    art: (
      <>
        <path d="M3 6h9l2 3h14v20H3z" fill="#f0d27a" stroke="#bd9336" />
        <path d="M6 4h6v5H6zM14 6h9v4h-9z" fill="#f8f0d0" stroke="#c9a443" strokeWidth=".7" />
        <path d="M8 5h3v2H8z" fill="#d9422e" />
        <path d="M4 11h24l1 18H3z" fill="#fbe9a5" stroke="#cba64a" />
        <path d="M8 32V21h17v11h-3v-7H11v7z" fill="#9fdcf5" stroke="#4e9cc4" />
      </>
    ),
  },
  {
    name: 'TeamSpeak',
    framed: '',
    art: (
      <>
        <path d="M10 2c14-3 22 5 21 14s-10 16-22 14c4-1 6-3 7-6 7-2 9-5 9-9 0-6-6-11-15-13z" fill="#86aeda" stroke="#33577f" />
        <path d="M8 4c7 2 12 7 12 13 0 5-2 8-6 10" stroke="#dbe9f8" strokeWidth="4" />
        <path d="M6 2c5 4 8 10 6 24" stroke="#33577f" strokeWidth="2.500" />
        <path d="M14 10c5 3 5 9 1 13z" fill="#4a6f99" />
        <circle cx="5" cy="16" r="4" fill="#4fb52e" stroke="#dff3d6" />
      </>
    ),
  },
  {
    name: 'Skype',
    framed: 'w-[52px]',
    art: (
      <>
        <rect x="1" y="1" width="30" height="30" rx="6" fill="#45c3f3" />
        <text x="16" y="25" fontSize="25" fontWeight="700" textAnchor="middle" fill="#fff">S</text>
      </>
    ),
  },
  {
    name: 'Media player',
    framed: 'w-[60px]',
    art: (
      <>
        <path d="M12 6h17v22H12z" fill="#8fd3ee" stroke="#d9f3fc" />
        <path d="M5 6h20v23H5z" fill="#d8eef7" stroke="#77b5d3" />
        <circle cx="15" cy="17" r="9" fill="#f26a21" stroke="#fff" />
        <path d="M12 11.500v11l9-5.500z" fill="#fff" />
      </>
    ),
  },
  {
    name: 'Firefox',
    framed: 'w-[60px]',
    art: (
      <>
        <circle cx="16" cy="16" r="14" fill="#f0701e" />
        <path d="M7 5c5-5 15-4 20 2 3 5 2 12-3 15-5 2-11 1-12-4-4-3-6-8-5-13z" fill="#264f9d" />
        <path d="M12 4c6-2 12 0 15 5-4-2-8-2-10 1-2-1-4-3-5-6z" fill="#59a8e3" />
        <path d="M3 9c1-2 1-4 3-5 0 2 1 4 2 5 3 0 5 1 6 3-1 1-4 1-4 3 3 1 5 3 8 4-2 2-5 2-8 0-4-2-6-6-7-10z" fill="#f58a2b" />
        <path d="M27 7c5 8 2 17-6 21 9-1 12-13 6-21z" fill="#ffd24a" />
      </>
    ),
  },
  {
    name: 'Game',
    framed: 'w-[60px]',
    art: (
      <>
        <path d="M9 11L30 2l-5 11-15 2z" fill="#2d4548" stroke="#16262a" />
        <path d="M6 17l22-3-3 14H7z" fill="#22b0b5" stroke="#0d5558" />
        <circle cx="23" cy="19" r="5" fill="#ffe14a" />
        <circle cx="11" cy="21" r="3" fill="#7de8e4" />
        <path d="M2 18h3v6H2z" fill="#c9202b" />
        <path d="M5 29h20" stroke="#d8fbff" strokeWidth="2" />
      </>
    ),
  },
  {
    name: 'Photoshop',
    framed: 'w-[60px]',
    art: (
      <>
        <path d="M2 5l3-2h26v25l-2 2H2z" fill="#0a3f9a" />
        <path d="M4 3h27v25H4z" fill="#1569d6" />
        <text x="17" y="21" fontSize="15" fontWeight="700" textAnchor="middle" fill="#bfeaff">Ps</text>
      </>
    ),
  },
  {
    name: 'OpenOffice Calc',
    framed: 'w-[60px]',
    art: (
      <>
        <path d="M9 2h16l5 6v23H9z" fill="#f6faf6" stroke="#5a6d6a" />
        <path d="M19 1l11 5v7c-3-5-6-7-12-9z" fill="#8ccb1e" />
        <path d="M6 3h6v28H6z" fill="#28435f" />
        <path d="M1 7c8-7 12-1 20-5M3 13c7-7 13 0 21-5" stroke="#7b8d99" strokeWidth="4" />
        <path d="M1 7c8-7 12-1 20-5M3 13c7-7 13 0 21-5" stroke="#f2f6f8" strokeWidth="2.500" />
        <path d="M14 17h14v11H14zM14 22.500h14M21 17v11" stroke="#7fb814" strokeWidth="2.200" />
      </>
    ),
  },
];

const Taskbar = () => (
  <footer className="relative flex h-10 shrink-0 items-center overflow-hidden border-t border-[#174a68] bg-linear-to-r from-[#5c93bd] via-[#84bfe6] via-25% to-[#8edcf8]">
    {/* Blurred wallpaper behind the glass */}
    <svg className="absolute inset-0 h-full w-full blur-[3px]" viewBox="0 0 1820 40" preserveAspectRatio="none" fill="none" aria-hidden="true">
      <path d="M580 40L660 8 760 0h290l-40 20-70 20z" fill="#5f8aa3" opacity=".75" />
      <path d="M580 40c60-26 100-30 180-36" stroke="#8fb4ca" strokeWidth="12" opacity=".6" />
      <path d="M830 40L950 0M920 40l80-36" stroke="#46657a" strokeWidth="9" opacity=".6" />
      <path d="M1120 0l-12 32M1200 12l10 22M1325 2l30 30M1384 0l12 12" stroke="#34466b" strokeWidth="12" opacity=".75" />
      <path d="M1215 8c30 4 50-2 75-6" stroke="#3f5b7d" strokeWidth="10" opacity=".6" />
      <path d="M1290 4l10 36M1410 20l90-18M1485 4l-30 36M1560 0l50 8" stroke="#4f7f9c" strokeWidth="5" opacity=".5" />
      <path d="M1658 0v40M1680 0l-3 40M1728 2l-40 36" stroke="#2f4565" strokeWidth="7" opacity=".75" />
      <path d="M1795 10h30v34h-30z" fill="#35536d" opacity=".8" />
    </svg>
    <button type="button" aria-label="Start" className="relative ml-2 shrink-0">
      <svg width="38" height="38" viewBox="0 0 38 38" fill="none" aria-hidden="true">
        <circle cx="19" cy="19" r="17.500" fill="#2a6aa0" stroke="#1d3f62" />
        <path d="M3 17C4 8 11 3 19 3s15 5 16 14c-8 4-24 4-32 0z" fill="#8fc3df" opacity=".7" />
        <path d="M10 9c3-2 6-2 9 0l-2 9c-3-2-6-2-9 0z" fill="#ec5a24" />
        <path d="M20 10c3 2 6 2 10 0l-2 9c-3 2-7 2-10 0z" fill="#8bc63c" />
        <path d="M8 19c3-2 6-2 9 0l-2 8c-3-2-6-2-9 0z" fill="#41b1ea" />
        <path d="M18 20c3 2 6 2 10 0l-2 8c-3 2-7 2-10 0z" fill="#fdd13a" />
      </svg>
    </button>
    <div className="relative ml-[13px] flex gap-0.5">
      {TASKS.map(task => (
        <button
          key={task.name}
          type="button"
          aria-label={task.name}
          className={clsx(
            'flex h-[38px] items-center justify-center',
            task.framed
              ? `${task.framed} rounded-xs border border-[#2f5a7c] bg-linear-to-b from-white/60 to-white/25 shadow-[inset_0_0_0_1px_rgba(255,255,255,0.5)]`
              : 'w-[60px]',
            task.name === 'Skype' && 'mr-2',
            task.name === 'OpenOffice Calc' && 'bg-white/50',
          )}
        >
          <svg className="overflow-visible" width="32" height="32" viewBox="0 0 32 32" fill="none" aria-hidden="true">{task.art}</svg>
        </button>
      ))}
    </div>
  </footer>
);

const App: React.FC = () => {
  return (
    <div className="flex h-screen flex-col overflow-hidden bg-white pt-[13px] font-['Open_Sans','Noto_Sans',sans-serif] text-[#0b1622]">
      <TitleBar />
      <MenuBar />
      <div className="shrink-0 bg-linear-to-b from-[#cddef5] to-[#d6e5f9]">
        <StandardBar />
        <FormattingBar />
      </div>
      <FormulaBar />
      <Sheet />
      <SheetTabs />
      <StatusBar />
      <Taskbar />
    </div>
  );
};

export default App;
